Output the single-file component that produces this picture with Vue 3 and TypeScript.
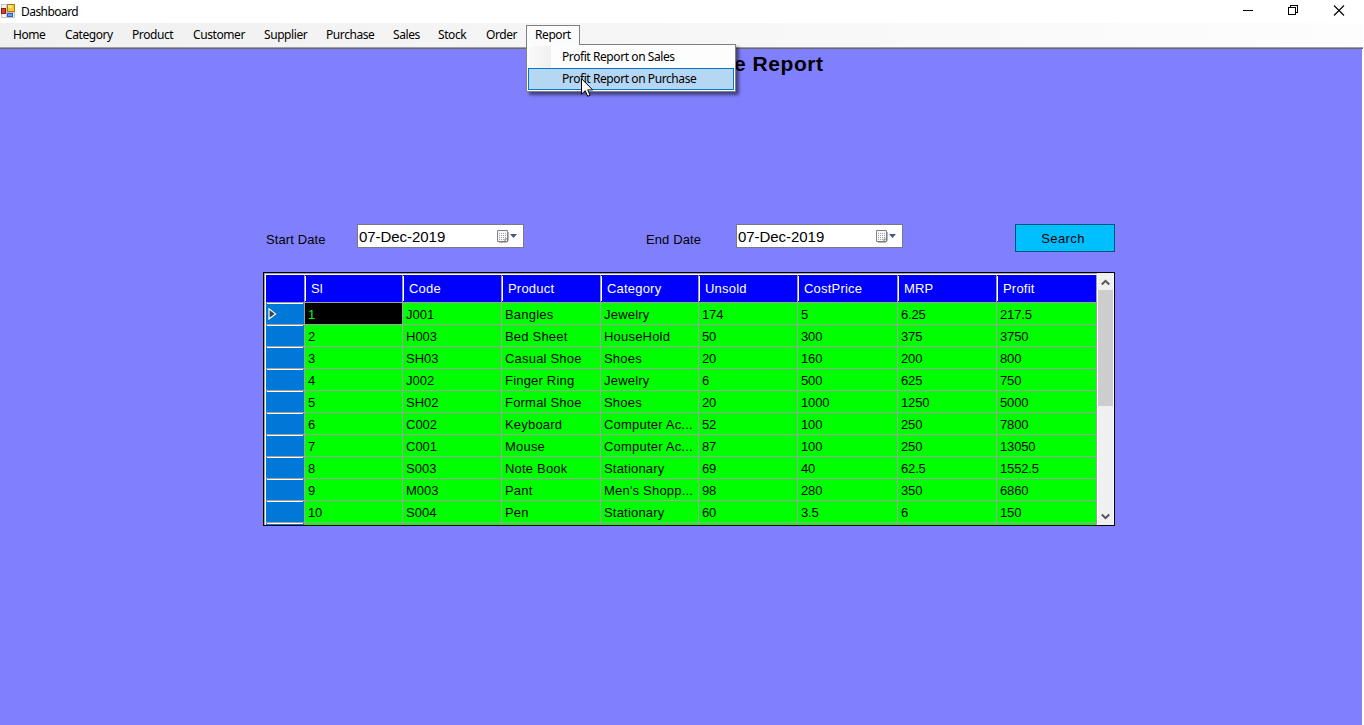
<script setup lang="ts">
const menus: string[] = ['Home', 'Category', 'Product', 'Customer', 'Supplier', 'Purchase', 'Sales', 'Stock', 'Order', 'Report']
const columns: string[] = ['Sl', 'Code', 'Product', 'Category', 'Unsold', 'CostPrice', 'MRP', 'Profit']
const rows: string[][] = [
  ['1', 'J001', 'Bangles', 'Jewelry', '174', '5', '6.25', '217.5'],
  ['2', 'H003', 'Bed Sheet', 'HouseHold', '50', '300', '375', '3750'],
  ['3', 'SH03', 'Casual Shoe', 'Shoes', '20', '160', '200', '800'],
  ['4', 'J002', 'Finger Ring', 'Jewelry', '6', '500', '625', '750'],
  ['5', 'SH02', 'Formal Shoe', 'Shoes', '20', '1000', '1250', '5000'],
  ['6', 'C002', 'Keyboard', 'Computer Ac...', '52', '100', '250', '7800'],
  ['7', 'C001', 'Mouse', 'Computer Ac...', '87', '100', '250', '13050'],
  ['8', 'S003', 'Note Book', 'Stationary', '69', '40', '62.5', '1552.5'],
  ['9', 'M003', 'Pant', "Men's Shopp...", '98', '280', '350', '6860'],
  ['10', 'S004', 'Pen', 'Stationary', '60', '3.5', '6', '150'],
]
const dates = [
  { label: 'Start Date', value: '07-Dec-2019' },
  { label: 'End Date', value: '07-Dec-2019' },
]
</script>

<template>
  <div class="window">
    <header class="titlebar">
      <svg class="app-icon" width="14" height="14" viewBox="0 0 14 14" shape-rendering="crispEdges">
        <rect width="14" height="14" fill="#c4c4c4" />
        <path d="M1 1h4v3H1zM1 10h4v3H1zM12 9h1v4h-1z" fill="#f4f4f4" />
        <rect x="6" y="0" width="8" height="8" fill="#a87a18" />
        <rect x="7" y="1" width="6" height="6" fill="#fcc62e" />
        <rect x="7" y="1" width="4" height="3" fill="#ffe27a" />
        <rect x="0" y="4" width="5" height="6" fill="#8c1c10" />
        <rect x="1" y="5" width="3" height="4" fill="#d2402c" />
        <rect x="6" y="9" width="6" height="4" fill="#2a5fc4" />
        <rect x="7" y="10" width="4" height="2" fill="#69a0f4" />
      </svg>
      <span class="caption">Dashboard</span>
      <svg class="controls" width="102" height="12" viewBox="0 0 102 12" fill="none" stroke="#000">
        <path d="M0 6.500h10M45.500 3.500h7v7h-7zM47.500 3.500v-2h7v7h-2" shape-rendering="crispEdges" />
        <path d="M91 1.500l10 10M101 1.500l-10 10" stroke-width="1.100" />
      </svg>
    </header>
    <nav class="menubar">
      <span v-for="m in menus" :key="m" class="menu" :class="{ open: m === 'Report' }">{{ m }}</span>
      <div class="dropdown">
        <div class="option"><span>Profit Report on Sales</span></div>
        <div class="option active"><span>Profit Report on Purchase</span></div>
      </div>
      <svg class="pointer" width="13" height="20" viewBox="0 0 13 20">
        <path d="M.5.700V16.200L4.200 12.700L6.700 18.300L9.100 17.200L6.700 11.900H11.700Z" fill="#fff" stroke="#000" />
      </svg>
    </nav>
    <main class="client">
      <h1>e Report</h1>
      <section class="filters">
        <template v-for="d in dates" :key="d.label">
          <label>{{ d.label }}</label>
          <div class="date">
            <span>{{ d.value }}</span>
            <svg width="21" height="14" viewBox="0 0 21 14">
              <path d="M2 12.500h7.500l2-2V2" fill="none" stroke="#b9b1ae" />
              <path d="M.5.500h10v11H.5z" fill="#f7f7f7" stroke="#85807e" />
              <path d="M2 3.500h7M2 5.500h7M2 7.500h7M2 9.500h5" stroke="#9aa6b4" stroke-dasharray="1 1" />
              <path d="M10.500 9h-2.500v2.500" fill="none" stroke="#85807e" />
              <path d="M13 4h7l-3.500 4z" fill="#435a84" />
            </svg>
          </div>
        </template>
        <button>Search</button>
      </section>
      <section class="grid">
        <div class="table">
          <div class="row head">
            <div class="corner"></div>
            <div v-for="c in columns" :key="c" class="cell">{{ c }}</div>
          </div>
          <div v-for="(r, i) in rows" :key="i" class="row">
            <div class="marker">
              <svg v-if="i === 0" width="9" height="12" viewBox="0 0 9 12">
                <path d="M1 .8V11L7.500 5.900Z" fill="#404040" stroke="#fff" stroke-width="1.200" />
              </svg>
            </div>
            <div v-for="(c, j) in r" :key="j" class="cell" :class="{ selected: i === 0 && j === 0, code: j === 1, number: j === 0 || j > 3 }">{{ c }}</div>
          </div>
          <div class="row"><div class="marker"></div><div v-for="c in columns" :key="c" class="cell"></div></div>
        </div>
        <div class="scrollbar">
          <svg width="9" height="7" viewBox="0 0 9 7"><path d="M.8 5.500L4.500 1.800L8.200 5.500" fill="none" stroke="#555" stroke-width="2" /></svg>
          <div class="thumb"></div>
          <svg width="9" height="7" viewBox="0 0 9 7"><path d="M.8 1.500L4.500 5.200L8.200 1.500" fill="none" stroke="#555" stroke-width="2" /></svg>
        </div>
      </section>
    </main>
  </div>
</template>

<style>
body { margin: 0; background: #fff; overflow: hidden; }
</style>

<style scoped>
* { box-sizing: border-box; }
.window { width: 1364px; height: 725px; display: flex; flex-direction: column; background: #fff; color: #000; font-family: "Liberation Sans", Arial, sans-serif; overflow: hidden; white-space: nowrap; }
.titlebar { height: 23px; flex: none; display: flex; align-items: flex-start; padding: 4px 19px 0 1px; font: 12px/16px "Noto Sans", sans-serif; }
.caption { margin-left: 6px; letter-spacing: -0.55px; }
.controls { margin-left: auto; }
.menubar { position: relative; z-index: 1; width: 1363px; height: 26px; flex: none; display: grid; grid-template-columns: 52px 67px 61px 71px 62px 67px 45px 48px 40px 54px; padding: 2px 0 0 13px; background: linear-gradient(90deg, #f0f0f0, #fdfdfd); border-bottom: 1px solid #696969; box-shadow: inset 0 -1px #a0a0a0; font: 12px/19px "Noto Sans", sans-serif; letter-spacing: -0.42px; }
.menu.open { height: 20px; padding-left: 8px; line-height: 17px; border: 1px solid #808080; border-bottom: 0; background: #fcfcfc; z-index: 2; }
.dropdown { position: absolute; left: 526px; top: 21px; width: 210px; height: 48px; padding: 1px; border: 1px solid #808080; background: #fdfdfd; box-shadow: 3px 3px 3px rgba(0, 0, 0, .5); }
.option { height: 22px; line-height: 21px; padding-left: 34px; background: linear-gradient(90deg, #f9f9f9, #f0f0f0) 1px 0 / 22px 22px no-repeat; }
.option.active { border: 1px solid #0078d7; padding-left: 33px; line-height: 19px; background: #b5d7f3; }
.pointer { position: absolute; left: 581px; top: 55px; z-index: 3; }
.client { width: 1362px; height: 676px; background: #8080ff; }
h1 { margin: 0; padding: 2px 0 0 734px; height: 175px; font-size: 21px; line-height: 26px; letter-spacing: .55px; }
.filters { display: grid; grid-template-columns: 91px 289px 90px 279px 100px; margin-left: 266px; height: 48px; align-items: start; font-size: 13px; }
label { padding-top: 8px; line-height: 15px; letter-spacing: .1px; }
.date { width: 167px; height: 24px; border: 1px solid #7a7a7a; background: #fff; display: flex; justify-content: space-between; padding: 5px 5px 0 1px; font-size: 15px; line-height: 15px; }
.date span { margin-top: -1px; letter-spacing: -.05px; }
button { height: 28px; padding: 0 4px 0 0; border: 1px solid #00567a; background: #00bfff; color: #000; font: 13px "Liberation Sans", sans-serif; letter-spacing: .4px; }
.grid { width: 852px; height: 254px; margin-left: 263px; border: 1px solid #000; display: flex; background: #fff; overflow: hidden; }
.table { width: 833px; height: 252px; padding: 1px 0 0 1px; border-top: 1px solid #a0a0a0; border-left: 1px solid #a0a0a0; overflow: hidden; font-size: 13px; letter-spacing: .2px; }
.row { display: grid; grid-template-columns: 39px 98px 99px 99px 98px 99px 100px 99px 100px; height: 22px; }
.cell { background: #0f0; border-right: 1px solid #a0a0a0; border-bottom: 1px solid #a0a0a0; padding-left: 3px; line-height: 23px; overflow: hidden; }
.cell.selected { background: #000; color: #0f0; }
.cell.number { letter-spacing: -.15px; }
.cell.code { letter-spacing: 0; }
.head { height: 28px; }
.head .cell { position: relative; background: #00f; color: #fff; padding-left: 6px; line-height: 27px; letter-spacing: .2px; }
.head .cell::before { content: ""; position: absolute; left: 0; top: 1px; width: 1px; height: 25px; background: #fff; }
.corner { background: #00f; border-right: 1px solid #a0a0a0; border-bottom: 1px solid #a0a0a0; }
.marker { background: linear-gradient(#fff, #fff) 1px 0 / 36px 1px no-repeat, #0078d7; border-right: 1px solid #a0a0a0; border-bottom: 1px solid #a0a0a0; padding: 5px 0 0 2px; }
.marker svg { display: block; }
.scrollbar { width: 15px; height: 252px; margin-left: 1px; background: #f0f0f0; display: flex; flex-direction: column; align-items: center; padding: 6px 0 5px; }
.thumb { width: 15px; height: 116px; margin: 4px 0 auto; background: #cdcdcd; }
</style>
